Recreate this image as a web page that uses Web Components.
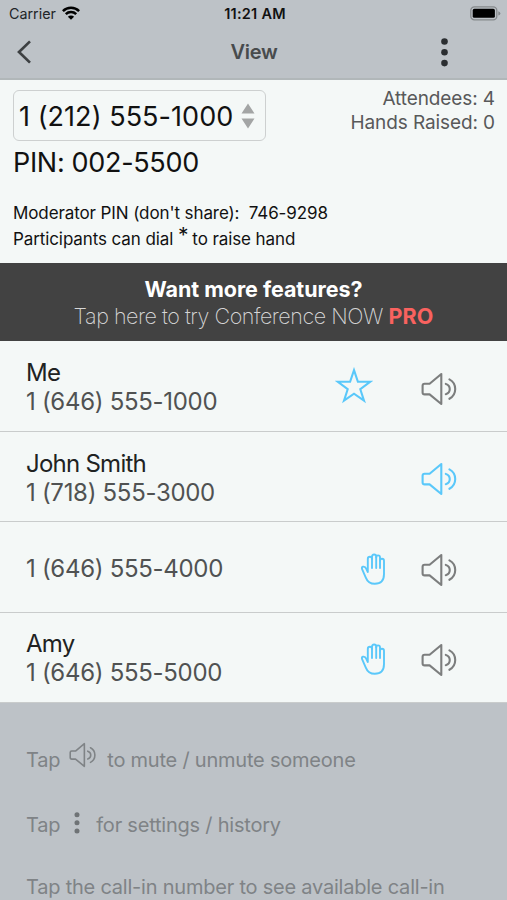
<!DOCTYPE html>
<html lang="en">
<head>
<meta charset="utf-8">
<title>View</title>
<style>
  :root {
    --bar-color: #bdc2c7;
    --panel-color: #f4f8f7;
    --line-color: #c9cccc;
    --blue: #5ac8fa;
    --gray: #7c7e7e;
    --main-font: Inter, "Liberation Sans", sans-serif;
  }
  body {
    margin: 0;
    height: 900px;
    overflow: hidden;
    background-color: var(--bar-color);
    font-family: var(--main-font);
  }
</style>
</head>
<body>
<conference-view></conference-view>

<script>
"use strict";

const icons = {
  back: `<svg width="16" height="26" viewBox="0 0 16 26"><path d="M14 2.4 3 13l11 10.6" fill="none" stroke="currentColor" stroke-width="2.7"/></svg>`,
  wifi: `<svg width="18" height="14" viewBox="0 0 18 14"><g fill="none" stroke="currentColor" stroke-width="2.5"><path d="M.9 5.1a11.5 11.5 0 0 1 16.2 0"/><path d="M3.8 8.2a7.4 7.4 0 0 1 10.4 0"/></g><path d="M9 13.8 5.9 10.7a4.4 4.4 0 0 1 6.2 0Z" fill="currentColor"/></svg>`,
  battery: `<svg width="31" height="15" viewBox="0 0 31 15"><rect x=".8" y=".8" width="26" height="13" rx="3.6" fill="none" stroke="#85898c" stroke-width="1.3"/><rect x="2.7" y="2.8" width="22.2" height="9" rx="1.6" fill="#000"/><path d="M28.3 5.2q2.1.8 2.1 2.2t-2.1 2.2Z" fill="#85898c"/></svg>`,
  dots: `<svg width="7" height="29" viewBox="0 0 7 29"><g fill="currentColor"><circle cx="3.5" cy="3.5" r="3.3"/><circle cx="3.5" cy="14.3" r="3.3"/><circle cx="3.5" cy="25.1" r="3.3"/></g></svg>`,
  sound: `<svg width="37" height="34" viewBox="0 0 37 34"><g fill="none" stroke="currentColor" stroke-width="2.1" stroke-linecap="round" stroke-linejoin="round"><path d="M3.6 11.8h5L20.3 2v30L8.6 22.4h-5q-2 0-2-2v-6.6q0-2 2-2Z"/><path d="M24.8 11.9a5.4 5.4 0 0 1 0 10.4"/><path d="M28.4 7.4a11 11 0 0 1 0 19.4"/></g></svg>`,
  star: `<svg width="38" height="37" viewBox="0 0 38 37"><path d="m19 3.2 3.9 11.6h12.2L25.3 22.2 29 33.6 19 26.7 9 33.6l3.7-11.4L2.9 14.8h12.2Z" fill="none" stroke="currentColor" stroke-width="2.1"/></svg>`,
  hand: `<svg width="26" height="33" viewBox="0 0 26 33"><g fill="none" stroke="currentColor" stroke-width="1.9" stroke-linecap="round" stroke-linejoin="round"><path d="M7.8 19V6q0-2.2 2.1-2.2T12 6V3.7q0-2.2 2.1-2.2t2.1 2.2V4.4q0-2 1.9-2T20 4.4V7.8q0-2 2-2t2 2V21q0 9.8-9.2 9.8-6.6 0-9-6.2L2.1 16.2q-.7-2 .8-2.5 2.4-.4 3.4 2.1L7.8 19"/><path d="M12 5.6V15M16.2 4.2V15M20 7.4V15"/></g></svg>`
};

class UiIcon extends HTMLElement {
  connectedCallback() {
    const shadow = this.attachShadow({ mode: "open" });
    shadow.innerHTML = `
    <style>
      :host { display: inline-flex; flex: none; }
      svg { display: block; width: var(--icon-width, auto); height: var(--icon-height, auto); }
    </style>
    ${icons[this.getAttribute("name")]}
    `;
  }
}
customElements.define("ui-icon", UiIcon);

class StatusBar extends HTMLElement {
  constructor() {
    super();
    const shadow = this.attachShadow({ mode: "open" });
    shadow.innerHTML = `
    <style>
      :host {
        display: grid;
        grid-template-columns: 1fr auto 1fr;
        align-items: center;
        box-sizing: border-box;
        height: 27px;
        padding: 0 6px 0 9px;
        font-size: 14.3px;
        color: #111;
      }
      .carrier { display: flex; align-items: center; gap: 6px; color: #222527; }
      .carrier ui-icon { color: #000; margin-top: -2px; }
      .time { font-weight: 600; font-size: 14.5px; letter-spacing: 0.25px; }
      .battery { justify-self: end; }
    </style>
    <div class="carrier"><span>Carrier</span><ui-icon name="wifi"></ui-icon></div>
    <div class="time">11:21 AM</div>
    <ui-icon class="battery" name="battery"></ui-icon>
    `;
  }
}
customElements.define("status-bar", StatusBar);

class NavBar extends HTMLElement {
  constructor() {
    super();
    const shadow = this.attachShadow({ mode: "open" });
    shadow.innerHTML = `
    <style>
      :host {
        display: grid;
        grid-template-columns: 1fr auto 1fr;
        align-items: center;
        box-sizing: border-box;
        height: 53px;
        padding: 0 59px 1px 16px;
        border-bottom: 2px solid #b1b7b9;
        color: #3d4042;
      }
      .title {
        /* side paddings differ, shift the title back to the middle */
        margin-left: 44px;
        font-size: 20px;
        font-weight: 600;
        letter-spacing: -0.3px;
        color: #484b4d;
      }
      .more { justify-self: end; color: #2b2e31; }
    </style>
    <ui-icon name="back"></ui-icon>
    <div class="title"><slot></slot></div>
    <ui-icon class="more" name="dots"></ui-icon>
    `;
  }
}
customElements.define("nav-bar", NavBar);

class CallInfo extends HTMLElement {
  constructor() {
    super();
    const shadow = this.attachShadow({ mode: "open" });
    shadow.innerHTML = `
    <style>
      :host {
        display: block;
        box-sizing: border-box;
        height: 183px;
        padding: 10px 12px 0 13px;
        background-color: var(--panel-color);
        color: #111;
      }
      .top { display: flex; justify-content: space-between; align-items: flex-start; }
      .number {
        display: flex;
        align-items: center;
        justify-content: space-between;
        box-sizing: border-box;
        width: 253px;
        height: 51px;
        padding: 1px 10px 0 5px;
        border: 1.5px solid #cdd0d0;
        border-radius: 6px;
        font-size: 27px;
        white-space: nowrap;
      }
      .digits { letter-spacing: 0.05px; }
      .counts {
        margin-top: -3px;
        text-align: right;
        font-size: 19px;
        line-height: 23.5px;
        letter-spacing: -0.1px;
        color: #58595a;
      }
      .pin { margin-top: 6px; font-size: 27px; line-height: 32px; letter-spacing: -0.32px; }
      .notes { margin-top: 21px; font-size: 17px; line-height: 26px; white-space: pre; }
      .moderator { letter-spacing: -0.1px; }
      .dial { letter-spacing: -0.1px; }
      .key { font-size: 21px; line-height: 0; letter-spacing: -0.8px; vertical-align: 2px; }
    </style>
    <div class="top">
      <div class="number">
        <span class="digits">1 (212) 555-1000</span>
        <svg width="14" height="26" viewBox="0 0 14 26"><path d="M7 .5 13.5 10.5H.5ZM7 25.5.5 15.5h13Z" fill="#a3a5a5"/></svg>
      </div>
      <div class="counts">
        <div class="attendees">Attendees: 4</div>
        <div class="hands">Hands Raised: 0</div>
      </div>
    </div>
    <div class="pin">PIN: 002-5500</div>
    <div class="notes"><div class="moderator">Moderator PIN (don't share):  746-9298</div><div class="dial">Participants can dial <span class="key">*</span> to raise hand</div></div>
    `;
  }
}
customElements.define("call-info", CallInfo);

class ProBanner extends HTMLElement {
  constructor() {
    super();
    const shadow = this.attachShadow({ mode: "open" });
    shadow.innerHTML = `
    <style>
      :host {
        display: block;
        box-sizing: border-box;
        height: 78px;
        padding-top: 13px;
        background-color: #424242;
        text-align: center;
        font-size: 21.5px;
        line-height: 26.5px;
        color: #fff;
      }
      .headline { font-weight: 700; letter-spacing: -0.05px; }
      .offer { font-weight: 200; letter-spacing: -0.46px; color: #d6d6d6; }
      .offer b { font-weight: 700; letter-spacing: 0.1px; color: #f9625f; }
    </style>
    <div class="headline">Want more features?</div>
    <div class="offer">Tap here to try Conference NOW <b>PRO</b></div>
    `;
  }
}
customElements.define("pro-banner", ProBanner);

class AttendeeRow extends HTMLElement {
  connectedCallback() {
    const name = this.getAttribute("name");
    const badge = this.getAttribute("badge");
    const shadow = this.attachShadow({ mode: "open" });
    shadow.innerHTML = `
    <style>
      :host {
        display: flex;
        align-items: center;
        box-sizing: border-box;
        height: 90.4px;
        padding: 2px 49px 0 26px;
        border-bottom: 1.5px solid var(--line-color);
        background-color: var(--panel-color);
        font-size: 24px;
        line-height: 29px;
      }
      :host(:first-of-type) { height: 91px; }
      .who { flex: 1; }
      .name { letter-spacing: -0.75px; color: #202222; }
      .phone { letter-spacing: -0.3px; color: #505252; }
      .badge { color: var(--blue); margin-right: 35px; margin-top: 2px; }
      .badge.star { margin-right: 48px; margin-top: -3px; }
      .sound { color: var(--gray); margin-top: 3px; }
      .sound.active { color: var(--blue); }
    </style>
    <div class="who">
      ${name ? `<div class="name">${name}</div>` : ""}
      <div class="phone"><slot></slot></div>
    </div>
    ${badge ? `<ui-icon class="badge ${badge}" name="${badge}"></ui-icon>` : ""}
    <ui-icon class="sound ${this.hasAttribute("talking") ? "active" : ""}" name="sound"></ui-icon>
    `;
  }
}
customElements.define("attendee-row", AttendeeRow);

class HelpTips extends HTMLElement {
  constructor() {
    super();
    const shadow = this.attachShadow({ mode: "open" });
    shadow.innerHTML = `
    <style>
      :host {
        display: flex;
        flex-direction: column;
        padding: 43.5px 26px 0;
        font-size: 20px;
        line-height: 26px;
        letter-spacing: -0.22px;
        color: #7f8386;
        white-space: nowrap;
      }
      .tip { display: flex; align-items: center; height: 26px; margin-bottom: 39.5px; }
      .tip + .tip { margin-bottom: 36px; }
      .sound { --icon-width: 28px; --icon-height: 26px; margin: -9px 10px 0 9px; }
      .dots { --icon-width: 6px; --icon-height: 22px; margin: -5px 16px 0 14px; color: #6f7376; }
    </style>
    <div class="tip"><span>Tap</span><ui-icon class="sound" name="sound"></ui-icon><span class="mute">to mute / unmute someone</span></div>
    <div class="tip"><span>Tap</span><ui-icon class="dots" name="dots"></ui-icon><span class="settings">for settings / history</span></div>
    <div class="tip"><span class="callin">Tap the call-in number to see available call-in</span></div>
    `;
  }
}
customElements.define("help-tips", HelpTips);

class ConferenceView extends HTMLElement {
  constructor() {
    super();
    const shadow = this.attachShadow({ mode: "open" });
    shadow.innerHTML = `
    <style>
      :host { display: block; }
    </style>
    <status-bar></status-bar>
    <nav-bar>View</nav-bar>
    <call-info></call-info>
    <pro-banner></pro-banner>
    <attendee-row name="Me" badge="star">1 (646) 555-1000</attendee-row>
    <attendee-row name="John Smith" talking>1 (718) 555-3000</attendee-row>
    <attendee-row badge="hand">1 (646) 555-4000</attendee-row>
    <attendee-row name="Amy" badge="hand">1 (646) 555-5000</attendee-row>
    <help-tips></help-tips>
    `;
  }
}
customElements.define("conference-view", ConferenceView);
</script>
</body>
</html>
